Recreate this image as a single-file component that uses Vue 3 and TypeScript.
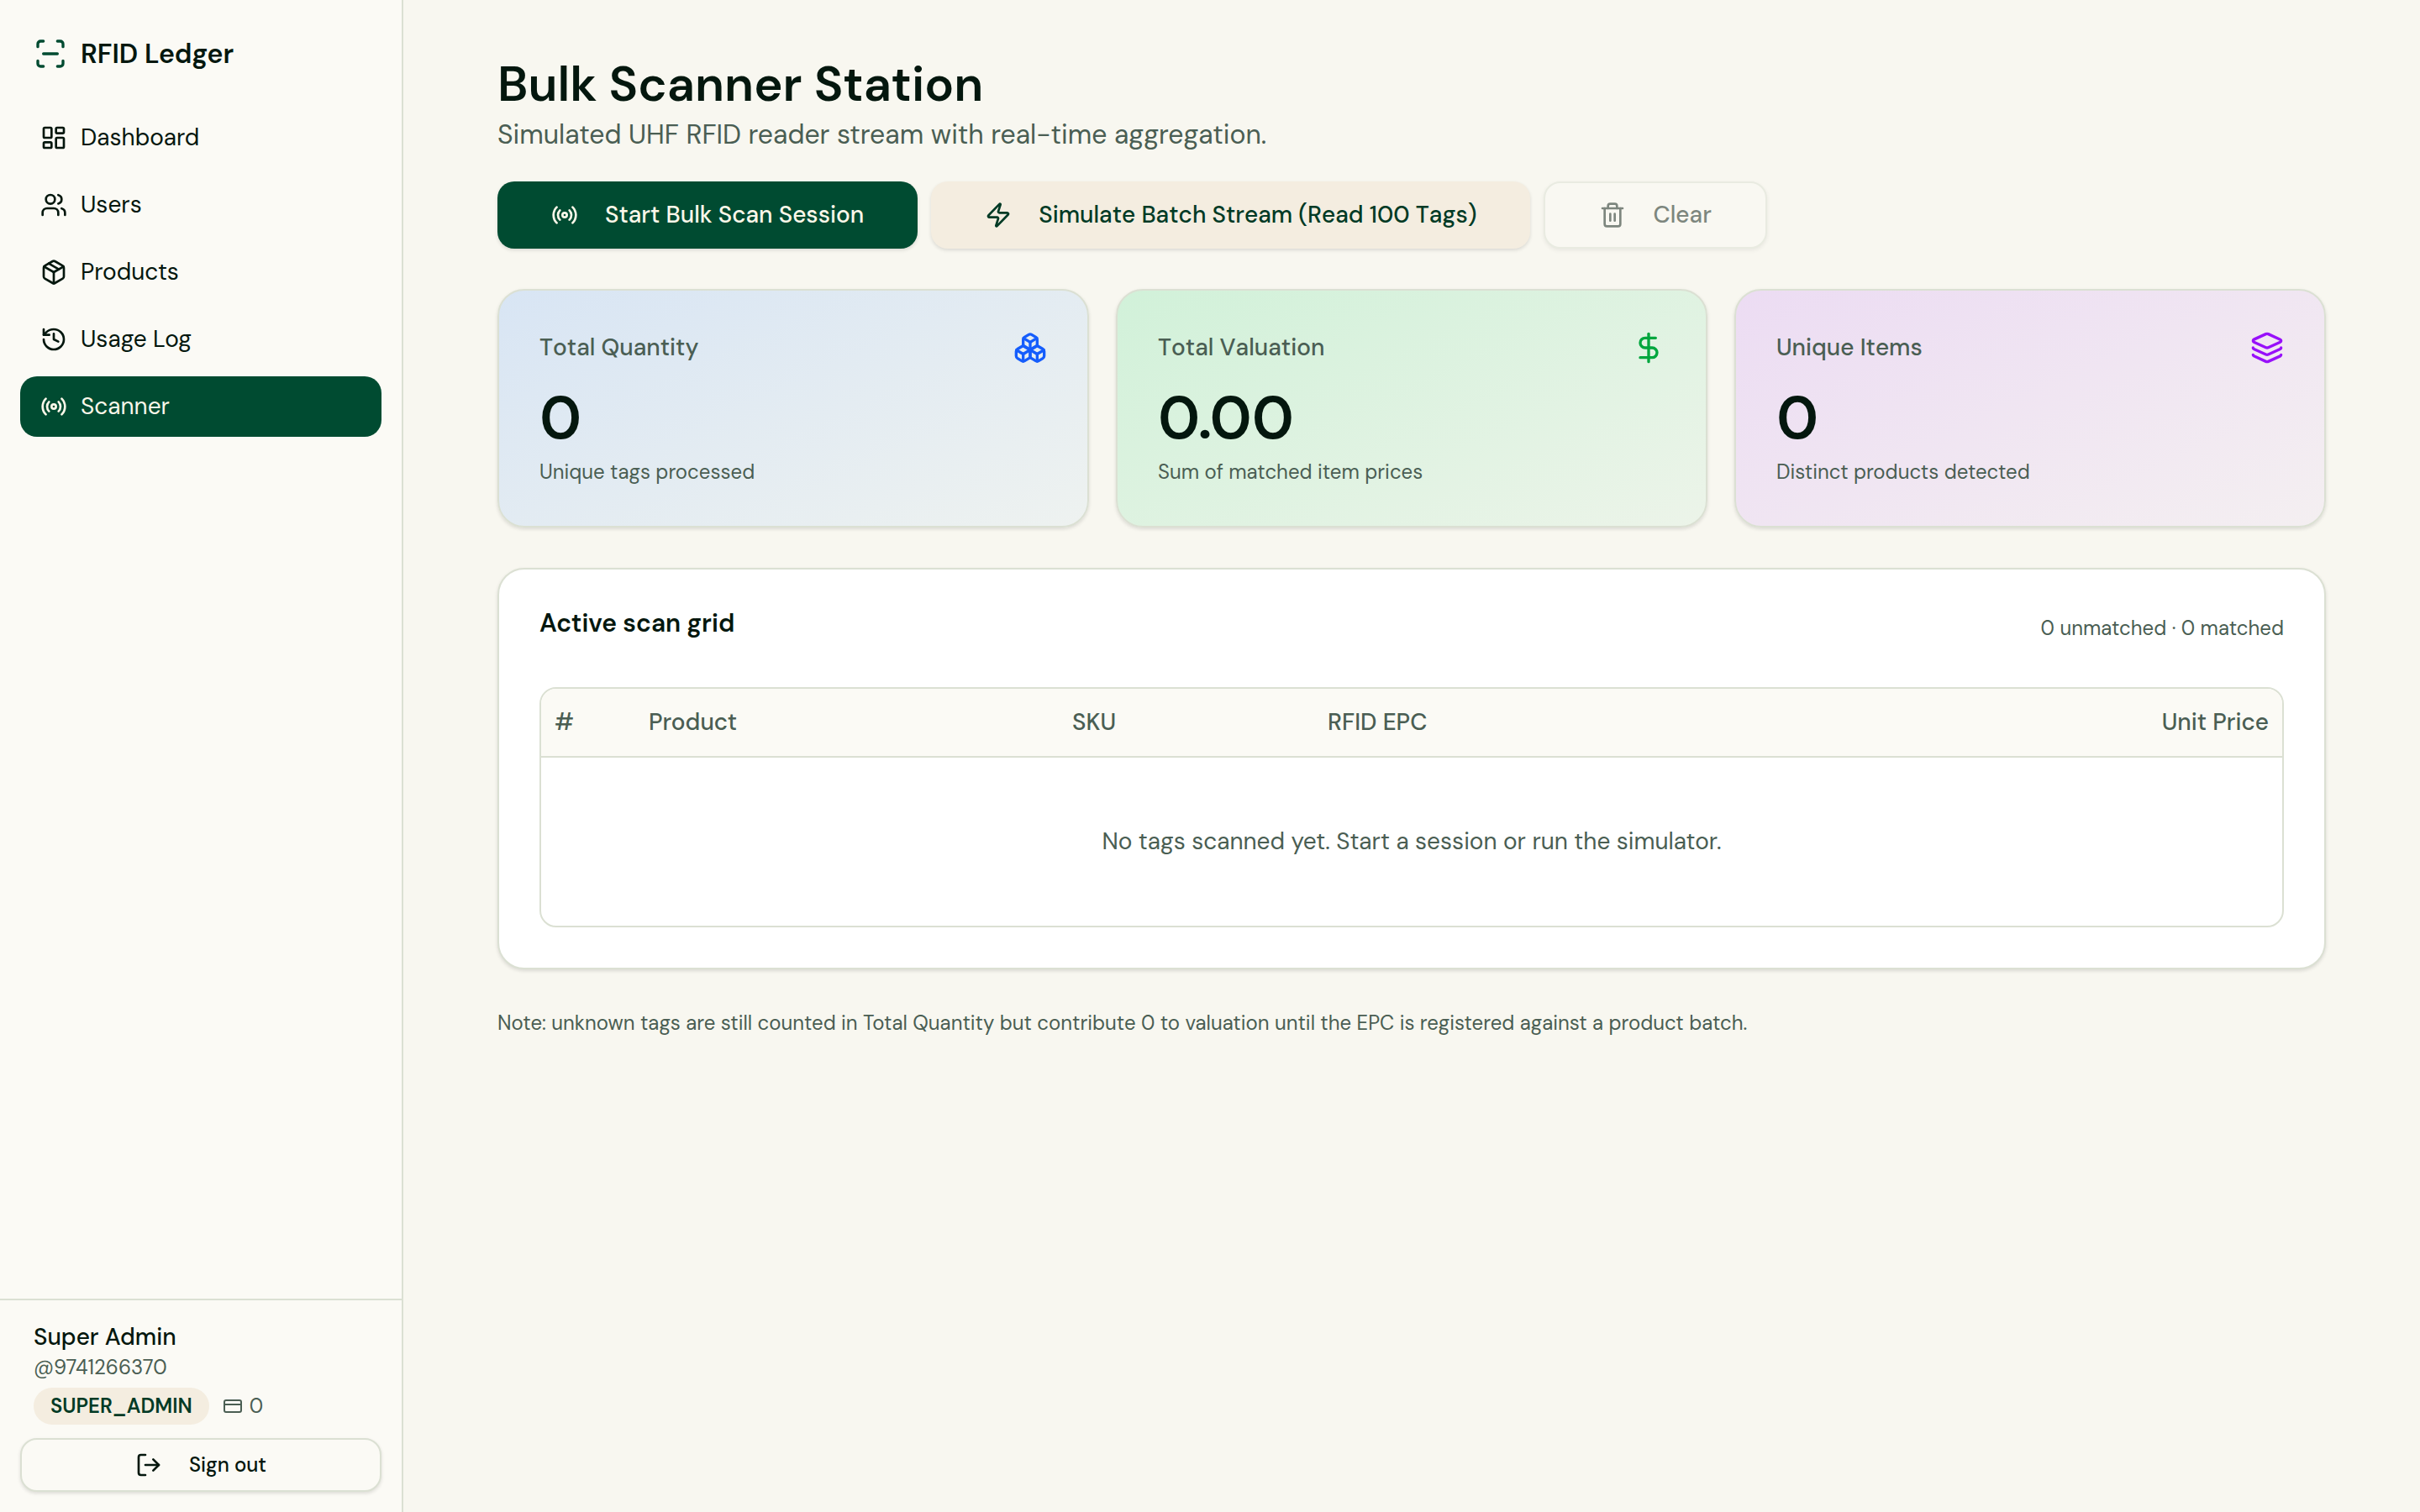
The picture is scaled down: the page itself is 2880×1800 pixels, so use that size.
<script setup lang="ts">
import { computed, h, ref } from 'vue'
import type { FunctionalComponent } from 'vue'

type IconName =
  | 'scan' | 'dashboard' | 'users' | 'package' | 'history' | 'radio'
  | 'zap' | 'trash' | 'boxes' | 'dollar' | 'layers' | 'logout' | 'card'

// Stroke paths on a 24 x 24 grid
const icons: Record<IconName, string[]> = {
  scan: ['M3 7V5a2 2 0 0 1 2-2h2', 'M17 3h2a2 2 0 0 1 2 2v2', 'M21 17v2a2 2 0 0 1-2 2h-2', 'M7 21H5a2 2 0 0 1-2-2v-2', 'M7 12h10'],
  dashboard: [
    'M4 3h5a1 1 0 0 1 1 1v7a1 1 0 0 1-1 1H4a1 1 0 0 1-1-1V4a1 1 0 0 1 1-1z',
    'M15 3h5a1 1 0 0 1 1 1v3a1 1 0 0 1-1 1h-5a1 1 0 0 1-1-1V4a1 1 0 0 1 1-1z',
    'M15 12h5a1 1 0 0 1 1 1v7a1 1 0 0 1-1 1h-5a1 1 0 0 1-1-1v-7a1 1 0 0 1 1-1z',
    'M4 16h5a1 1 0 0 1 1 1v3a1 1 0 0 1-1 1H4a1 1 0 0 1-1-1v-3a1 1 0 0 1 1-1z',
  ],
  users: ['M16 21v-2a4 4 0 0 0-4-4H6a4 4 0 0 0-4 4v2', 'M16 3.128a4 4 0 0 1 0 7.744', 'M22 21v-2a4 4 0 0 0-3-3.87', 'M13 7a4 4 0 1 1-8 0a4 4 0 0 1 8 0z'],
  package: [
    'M11 21.73a2 2 0 0 0 2 0l7-4A2 2 0 0 0 21 16V8a2 2 0 0 0-1-1.73l-7-4a2 2 0 0 0-2 0l-7 4A2 2 0 0 0 3 8v8a2 2 0 0 0 1 1.73z',
    'M12 22V12', 'M3.29 7L12 12L20.71 7', 'M7.5 4.27l9 5.15',
  ],
  history: ['M3 12a9 9 0 1 0 9-9 9.75 9.75 0 0 0-6.74 2.74L3 8', 'M3 3v5h5', 'M12 7v5l4 2'],
  radio: ['M16.247 7.761a6 6 0 0 1 0 8.478', 'M19.075 4.933a10 10 0 0 1 0 14.134', 'M4.925 19.067a10 10 0 0 1 0-14.134', 'M7.753 16.239a6 6 0 0 1 0-8.478', 'M14 12a2 2 0 1 1-4 0a2 2 0 0 1 4 0z'],
  zap: ['M4 14a1 1 0 0 1-.78-1.63l9.9-10.2a.5.5 0 0 1 .86.46l-1.92 6.02A1 1 0 0 0 13 10h7a1 1 0 0 1 .78 1.63l-9.9 10.2a.5.5 0 0 1-.86-.46l1.92-6.02A1 1 0 0 0 11 14z'],
  trash: ['M10 11v6', 'M14 11v6', 'M19 6v14a2 2 0 0 1-2 2H7a2 2 0 0 1-2-2V6', 'M3 6h18', 'M8 6V4a2 2 0 0 1 2-2h4a2 2 0 0 1 2 2v2'],
  boxes: [
    'M2.97 12.92A2 2 0 0 0 2 14.63v3.24a2 2 0 0 0 .97 1.71l3 1.8a2 2 0 0 0 2.06 0L12 19v-5.5l-5-3-4.03 2.42Z',
    'M7 16.5l-4.74-2.85', 'M7 16.5l5-3', 'M7 16.5v5.17',
    'M12 13.5V19l3.97 2.38a2 2 0 0 0 2.06 0l3-1.8a2 2 0 0 0 .97-1.71v-3.24a2 2 0 0 0-.97-1.71L17 10.5l-5 3Z',
    'M17 16.5l-5-3', 'M17 16.5l4.74-2.85', 'M17 16.5v5.17',
    'M7.97 4.42A2 2 0 0 0 7 6.13v4.37l5 3 5-3V6.13a2 2 0 0 0-.97-1.71l-3-1.8a2 2 0 0 0-2.06 0l-3 1.8Z',
    'M12 8L7.26 5.15', 'M12 8l4.74-2.85', 'M12 13.5V8',
  ],
  dollar: ['M12 2v20', 'M17 5H9.5a3.5 3.5 0 0 0 0 7h5a3.5 3.5 0 0 1 0 7H6'],
  layers: [
    'M12.83 2.18a2 2 0 0 0-1.66 0L2.6 6.08a1 1 0 0 0 0 1.83l8.58 3.91a2 2 0 0 0 1.66 0l8.58-3.9a1 1 0 0 0 0-1.83z',
    'M2 12a1 1 0 0 0 .58.91l8.6 3.91a2 2 0 0 0 1.65 0l8.58-3.9A1 1 0 0 0 22 12',
    'M2 17a1 1 0 0 0 .58.91l8.6 3.91a2 2 0 0 0 1.65 0l8.58-3.9A1 1 0 0 0 22 17',
  ],
  logout: ['M16 17l5-5-5-5', 'M21 12H9', 'M9 21H5a2 2 0 0 1-2-2V5a2 2 0 0 1 2-2h4'],
  card: ['M4 5h16a2 2 0 0 1 2 2v10a2 2 0 0 1-2 2H4a2 2 0 0 1-2-2V7a2 2 0 0 1 2-2z', 'M2 10h20'],
}

const Icon: FunctionalComponent<{ name: IconName }> = (props) =>
  h(
    'svg',
    {
      viewBox: '0 0 24 24',
      fill: 'none',
      stroke: 'currentColor',
      'stroke-width': 2,
      'stroke-linecap': 'round',
      'stroke-linejoin': 'round',
      'aria-hidden': 'true',
    },
    icons[props.name].map((d) => h('path', { d })),
  )
Icon.props = ['name']

interface Tag {
  epc: string
  product: string | null
  sku: string
  price: number
}

const nav: { label: string; icon: IconName }[] = [
  { label: 'Dashboard', icon: 'dashboard' },
  { label: 'Users', icon: 'users' },
  { label: 'Products', icon: 'package' },
  { label: 'Usage Log', icon: 'history' },
  { label: 'Scanner', icon: 'radio' },
]
const current = ref('Scanner')

const tags = ref<Tag[]>([])
const matched = computed(() => tags.value.filter((t) => t.product !== null))
const valuation = computed(() => matched.value.reduce((sum, t) => sum + t.price, 0))
const uniqueItems = computed(() => new Set(matched.value.map((t) => t.sku)).size)

const stats = computed<{ label: string; value: string; note: string; icon: IconName; tone: string }[]>(() => [
  { label: 'Total Quantity', value: String(tags.value.length), note: 'Unique tags processed', icon: 'boxes', tone: 'blue' },
  { label: 'Total Valuation', value: valuation.value.toFixed(2), note: 'Sum of matched item prices', icon: 'dollar', tone: 'green' },
  { label: 'Unique Items', value: String(uniqueItems.value), note: 'Distinct products detected', icon: 'layers', tone: 'purple' },
])
</script>

<template>
  <div class="shell">
    <aside class="sidebar">
      <div class="brand">
        <Icon name="scan" class="icon-lg" />
        <span>RFID Ledger</span>
      </div>
      <nav class="nav" aria-label="Main">
        <a
          v-for="item in nav"
          :key="item.label"
          href="#"
          class="nav-link"
          :class="{ active: item.label === current }"
          @click.prevent="current = item.label"
        >
          <Icon :name="item.icon" class="icon" />
          <span>{{ item.label }}</span>
        </a>
      </nav>
      <div class="account">
        <div class="profile">
          <div class="name">Super Admin</div>
          <div class="handle">@9741266370</div>
          <div class="role-row">
            <span class="badge">SUPER_ADMIN</span>
            <span class="credits"><Icon name="card" class="icon-sm" />0</span>
          </div>
        </div>
        <button type="button" class="btn outline small">
          <Icon name="logout" class="icon" />
          <span>Sign out</span>
        </button>
      </div>
    </aside>

    <main class="main">
      <div class="intro">
        <header>
          <h1>Bulk Scanner Station</h1>
          <p>Simulated UHF RFID reader stream with real-time aggregation.</p>
        </header>
        <div class="actions">
          <button type="button" class="btn primary">
            <Icon name="radio" class="icon" />
            <span>Start Bulk Scan Session</span>
          </button>
          <button type="button" class="btn secondary">
            <Icon name="zap" class="icon" />
            <span>Simulate Batch Stream (Read 100 Tags)</span>
          </button>
          <button type="button" class="btn outline" :disabled="tags.length === 0">
            <Icon name="trash" class="icon" />
            <span>Clear</span>
          </button>
        </div>
      </div>

      <section class="stats">
        <article v-for="stat in stats" :key="stat.label" class="card stat" :class="stat.tone">
          <div class="stat-head">
            <span>{{ stat.label }}</span>
            <Icon :name="stat.icon" class="icon-lg" />
          </div>
          <div class="stat-value">{{ stat.value }}</div>
          <div class="stat-note">{{ stat.note }}</div>
        </article>
      </section>

      <section class="card panel">
        <div class="panel-head">
          <h2>Active scan grid</h2>
          <span class="summary">{{ tags.length - matched.length }} unmatched · {{ matched.length }} matched</span>
        </div>
        <div class="table-wrap">
          <table>
            <thead>
              <tr>
                <th class="col-index">#</th>
                <th class="col-product">Product</th>
                <th class="col-sku">SKU</th>
                <th>RFID EPC</th>
                <th class="col-price">Unit Price</th>
              </tr>
            </thead>
            <tbody>
              <tr v-for="(tag, i) in tags" :key="tag.epc">
                <td>{{ i + 1 }}</td>
                <td>{{ tag.product }}</td>
                <td>{{ tag.sku }}</td>
                <td>{{ tag.epc }}</td>
                <td class="col-price">{{ tag.price.toFixed(2) }}</td>
              </tr>
              <tr v-if="tags.length === 0">
                <td colspan="5" class="empty">No tags scanned yet. Start a session or run the simulator.</td>
              </tr>
            </tbody>
          </table>
        </div>
      </section>

      <p class="note">
        Note: unknown tags are still counted in Total Quantity but contribute 0 to valuation until the EPC is
        registered against a product batch.
      </p>
    </main>
  </div>
</template>

<style>
body {
  margin: 0;
  background: #f8f7f0;
}
</style>

<style scoped>
.shell {
  --ink: #04170e;
  --muted: #4a5e53;
  --line: #dbe0d3;
  --surface: #fbfaf5;
  --green: #004b31;
  --sand: #f4ede0;
  --sand-ink: #003a25;
  display: flex;
  min-height: 100vh;
  background: #f8f7f0;
  color: var(--ink);
  font-family: "DM Sans", Inter, sans-serif;
  font-size: 28px;
  line-height: 40px;
}

.shell *,
.shell {
  box-sizing: border-box;
}

.icon,
.icon-sm,
.icon-lg {
  flex: none;
  width: 32px;
  height: 32px;
}

.icon-sm {
  width: 24px;
  height: 24px;
}

.icon-lg {
  width: 40px;
  height: 40px;
}

.sidebar {
  position: sticky;
  top: 0;
  display: flex;
  flex: none;
  flex-direction: column;
  width: 480px;
  height: 100vh;
  border-right: 2px solid var(--line);
  background: var(--surface);
}

.brand {
  display: flex;
  align-items: center;
  gap: 16px;
  height: 128px;
  padding: 0 40px;
  font-size: 32px;
  font-weight: 600;
}

.brand svg {
  color: var(--green);
}

.nav {
  display: flex;
  flex: 1;
  flex-direction: column;
  gap: 8px;
  padding: 0 24px;
}

.nav-link {
  display: flex;
  align-items: center;
  gap: 16px;
  height: 72px;
  padding: 0 24px;
  border-radius: 20px;
  color: inherit;
  text-decoration: none;
}

.nav-link.active {
  background: var(--green);
  color: #fbf7e9;
}

.account {
  padding: 24px;
  border-top: 2px solid var(--line);
}

.profile {
  padding: 0 16px 16px;
}

.name {
  font-weight: 500;
}

.handle {
  color: var(--muted);
  font-size: 24px;
  line-height: 32px;
}

.role-row {
  display: flex;
  align-items: center;
  gap: 16px;
  margin-top: 8px;
  font-size: 24px;
}

.badge {
  padding: 0 20px;
  border-radius: 22px;
  background: var(--sand);
  color: var(--sand-ink);
  font-weight: 600;
  line-height: 44px;
}

.credits {
  display: flex;
  align-items: center;
  gap: 8px;
  color: var(--muted);
}

.btn {
  display: flex;
  align-items: center;
  justify-content: center;
  gap: 32px;
  height: 80px;
  padding: 0 64px;
  border: 0;
  border-radius: 20px;
  box-shadow: 0 2px 4px rgb(0 0 0 / 12%);
  color: var(--ink);
  font: inherit;
  font-kerning: none;
  font-weight: 500;
}

.btn.primary {
  background: var(--green);
  color: #fbf7e9;
}

.btn.secondary {
  background: var(--sand);
  color: var(--sand-ink);
}

.btn.outline {
  border: 2px solid var(--line);
  background: var(--surface);
}

.btn.small {
  width: 100%;
  height: 64px;
  font-size: 24px;
}

.btn:disabled {
  opacity: 0.5;
}

.main {
  display: flex;
  flex: 1;
  flex-direction: column;
  gap: 48px;
  min-width: 0;
  padding: 64px 112px;
}

.intro {
  display: flex;
  flex-direction: column;
  gap: 32px;
}

.intro h1 {
  margin: 0;
  font-size: 58px;
  font-weight: 600;
  line-height: 72px;
}

.intro p {
  margin: 0;
  color: var(--muted);
  font-size: 32px;
  line-height: 48px;
}

.actions {
  display: flex;
  flex-wrap: wrap;
  gap: 16px;
}

.card {
  border: 2px solid var(--line);
  border-radius: 32px;
  box-shadow: 0 2px 4px rgb(0 0 0 / 12%);
  padding: 48px;
}

.stats {
  display: grid;
  grid-template-columns: repeat(3, 1fr);
  gap: 32px;
}

.stat.blue {
  background: linear-gradient(155deg, #d8e5f4, #eef2f0);
}

.stat.green {
  background: linear-gradient(155deg, #d1f1d9, #ecf4e9);
}

.stat.purple {
  background: linear-gradient(155deg, #ecdcf3, #f4eff1);
}

.stat-head {
  display: flex;
  align-items: center;
  justify-content: space-between;
  color: var(--muted);
  font-kerning: none;
  font-weight: 500;
}

.blue svg {
  color: #155dfc;
}

.green svg {
  color: #00a63e;
}

.purple svg {
  color: #9810fa;
}

.stat-value {
  margin-top: 24px;
  font-size: 72px;
  font-weight: 600;
  line-height: 80px;
}

.stat-note {
  margin-top: 8px;
  color: var(--muted);
  font-size: 24px;
  line-height: 32px;
}

.panel {
  background: #fff;
}

.panel-head {
  display: flex;
  align-items: flex-start;
  justify-content: space-between;
  min-height: 38px;
  margin-bottom: 54px;
}

.panel-head h2 {
  margin: 0;
  font-size: 30px;
  font-weight: 600;
  line-height: 32px;
}

.summary {
  align-self: flex-end;
  color: var(--muted);
  font-size: 24px;
  line-height: 32px;
}

.table-wrap {
  overflow: hidden;
  border: 2px solid var(--line);
  border-radius: 20px;
}

table {
  width: 100%;
  border-collapse: separate;
  border-spacing: 0;
  table-layout: fixed;
  color: var(--muted);
}

th {
  height: 82px;
  padding: 0 16px;
  border-bottom: 2px solid var(--line);
  background: var(--surface);
  font-weight: 500;
  text-align: left;
}

td {
  padding: 16px;
}

.col-index {
  width: 112px;
}

.col-product {
  width: 504px;
}

.col-sku {
  width: 304px;
}

.col-price {
  text-align: right;
}

.empty {
  height: 200px;
  text-align: center;
}

.note {
  margin: 0;
  color: var(--muted);
  font-size: 24px;
  line-height: 32px;
}
</style>
